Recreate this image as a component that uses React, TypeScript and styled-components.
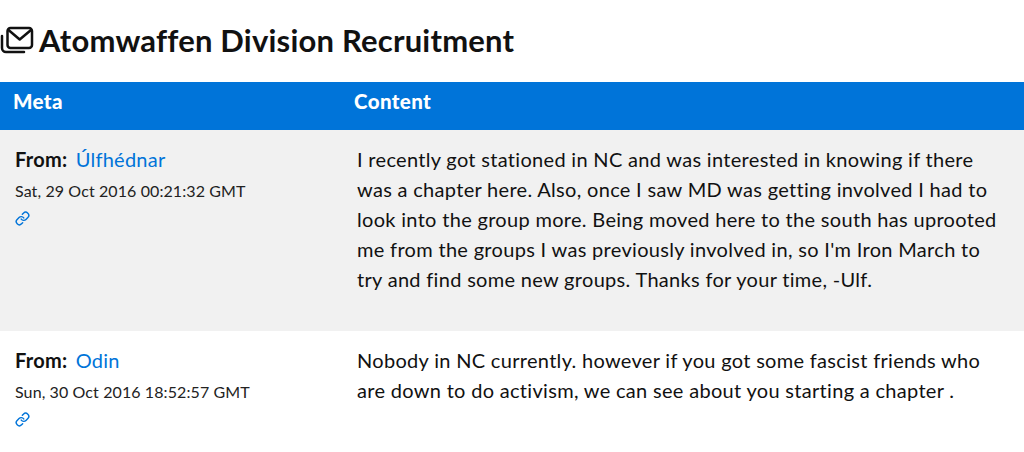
import { createGlobalStyle, styled } from "styled-components";

const GlobalStyle = createGlobalStyle`
  html, body {
    margin: 0;
    padding: 0;
    background: #fff;
    overflow: hidden;
  }
  body {
    font-family: "Lato", "Liberation Sans", sans-serif;
    color: #111;
  }
`;

const Page = styled.div`
  width: 1024px;
  height: 452px;
  overflow: hidden;
`;

const Title = styled.h1`
  display: flex;
  align-items: center;
  gap: 4px;
  height: 82px;
  margin: 0;
  padding-bottom: 3px;
  box-sizing: border-box;
  font-size: 31px;
  font-weight: 700;
  letter-spacing: 0.2px;
  color: #111;
`;

const HeaderRow = styled.div`
  display: grid;
  grid-template-columns: 354px 1fr;
  height: 48px;
  align-items: center;
  padding-bottom: 11px;
  box-sizing: border-box;
  background: #0074d9;
  color: #fff;
  font-size: 20.5px;
  font-weight: 900;
  letter-spacing: 0.4px;
`;

const HeaderCell = styled.div<{ $first?: boolean }>`
  padding-left: ${(p) => (p.$first ? "13px" : "0")};
`;

const Row = styled.div<{ $shaded?: boolean; $height: number }>`
  display: grid;
  grid-template-columns: 357px 1fr;
  height: ${(p) => p.$height}px;
  background: ${(p) => (p.$shaded ? "#f1f1f1" : "#fff")};
`;

const Meta = styled.div`
  padding: 14px 0 0 15px;
`;

const From = styled.div`
  font-size: 20px;
  line-height: 30px;
  letter-spacing: 0.25px;
`;

const Label = styled.strong`
  font-weight: 700;
`;

const Author = styled.a`
  margin-left: 3px;
  color: #0074d9;
  text-decoration: none;
`;

const Sent = styled.div`
  font-size: 16px;
  line-height: 30px;
  letter-spacing: 0.1px;
  margin-top: 2px;
  color: #222;
`;

const Permalink = styled.a`
  display: block;
  height: 16px;
  line-height: 0;
  margin-top: 5px;
  color: #0074d9;
`;

const Body = styled.p`
  margin: 0;
  padding: 14px 20px 0 0;
  font-size: 20px;
  line-height: 30px;
  letter-spacing: 0.31px;
  color: #111;
`;

const MailIcon = () => (
  <svg width="35" height="30" viewBox="0 0 35 30" fill="none" stroke="#111" strokeWidth="2.5" strokeLinecap="round" strokeLinejoin="round">
    <rect x="7.5" y="3" width="24.5" height="20" rx="3" />
    <path d="M8.5 5 L19.7 14.5 L31 5" />
    <path d="M2 11 V23 A4 4 0 0 0 6 27 H24" />
  </svg>
);

const LinkIcon = () => (
  <svg width="15" height="15" viewBox="0 0 24 24" fill="none" stroke="currentColor" strokeWidth="2.3" strokeLinecap="round" strokeLinejoin="round">
    <path d="M10 13a5 5 0 0 0 7.54.54l3-3a5 5 0 0 0-7.07-7.07l-1.72 1.71" />
    <path d="M14 11a5 5 0 0 0-7.54-.54l-3 3a5 5 0 0 0 7.07 7.07l1.71-1.71" />
  </svg>
);

const messages = [
  {
    author: "Úlfhédnar",
    sent: "Sat, 29 Oct 2016 00:21:32 GMT",
    height: 201,
    shaded: true,
    body: "I recently got stationed in NC and was interested in knowing if there was a chapter here. Also, once I saw MD was getting involved I had to look into the group more. Being moved here to the south has uprooted me from the groups I was previously involved in, so I'm Iron March to try and find some new groups. Thanks for your time, -Ulf.",
  },
  {
    author: "Odin",
    sent: "Sun, 30 Oct 2016 18:52:57 GMT",
    height: 121,
    shaded: false,
    body: "Nobody in NC currently. however if you got some fascist friends who are down to do activism, we can see about you starting a chapter .",
  },
];

export default function App() {
  return (
    <Page>
      <GlobalStyle />
      <Title>
        <MailIcon />
        Atomwaffen Division Recruitment
      </Title>
      <HeaderRow>
        <HeaderCell $first>Meta</HeaderCell>
        <HeaderCell>Content</HeaderCell>
      </HeaderRow>
      {messages.map((m) => (
        <Row key={m.sent} $shaded={m.shaded} $height={m.height}>
          <Meta>
            <From>
              <Label>From:</Label> <Author href="#">{m.author}</Author>
            </From>
            <Sent>{m.sent}</Sent>
            <Permalink href="#">
              <LinkIcon />
            </Permalink>
          </Meta>
          <Body>{m.body}</Body>
        </Row>
      ))}
    </Page>
  );
}
